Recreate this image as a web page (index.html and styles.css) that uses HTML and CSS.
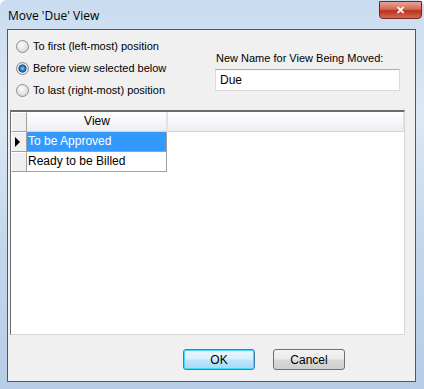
FILE: index.html
```html
<html>
<head>
<title>Move 'Due' View</title>
<link rel="stylesheet" href="styles.css">
</head>
<body>
<div class="window">
  <div class="titlebar">
    <span class="title">Move 'Due' View</span>
    <button class="close" type="button">&#x2715;</button>
  </div>
  <div class="client">
    <div class="top">
      <div class="options">
        <label class="opt"><span class="radio"></span>To first (left-most) position</label>
        <label class="opt"><span class="radio on"></span>Before view selected below</label>
        <label class="opt"><span class="radio"></span>To last (right-most) position</label>
      </div>
      <div class="rename">
        <div class="lbl">New Name for View Being Moved:</div>
        <div class="field">Due</div>
      </div>
    </div>

    <div class="grid">
      <div class="row head">
        <div class="rh"></div>
        <div class="cell">View</div>
        <div class="fill"></div>
      </div>
      <div class="row">
        <div class="rh"><span class="arrow"></span></div>
        <div class="cell sel">To be Approved</div>
      </div>
      <div class="row">
        <div class="rh"></div>
        <div class="cell">Ready to be Billed</div>
      </div>
    </div>

    <div class="buttons">
      <button class="btn def" type="button">OK</button>
      <button class="btn" type="button">Cancel</button>
    </div>
  </div>
</div>
</body>
</html>
```

FILE: styles.css
```css
body {
  margin: 0;
  font-family: "Liberation Sans", Arial, sans-serif;
  font-size: 11px;
}
.window {
  width: 424px;
  height: 389px;
  box-sizing: border-box;
  padding: 0 8px 7px 7px;
  border-radius: 6px 6px 0 0;
  background: linear-gradient(to bottom, #c9dcef 0%, #dce8f4 30%, #c4d8ec 60%, #b6cde6 100%);
  display: flex;
  flex-direction: column;
}
.titlebar {
  height: 29px;
  display: flex;
  justify-content: space-between;
  align-items: flex-start;
}
.title {
  margin-top: 7px;
  margin-left: 1px;
  font-family: "Open Sans", sans-serif;
  font-size: 12px;
  color: #000;
}
.close {
  width: 43px;
  height: 18px;
  margin-top: 1px;
  margin-right: -6px;
  border: 1px solid #6b2a22;
  border-radius: 0 0 4px 4px;
  background: linear-gradient(to bottom, #e8a493 0%, #d36a55 45%, #b8311c 55%, #d96a4a 100%);
  color: #fff;
  font-size: 11px;
  font-weight: bold;
  line-height: 14px;
  padding: 0;
}
.client {
  flex: 1;
  border: 1px solid #4c5866;
  background: #f0f0f0;
  display: flex;
  flex-direction: column;
}
.top {
  height: 80px;
  display: flex;
}
.options {
  width: 199px;
  padding: 5px 0 0 8px;
  display: flex;
  flex-direction: column;
}
.opt {
  height: 22px;
  display: flex;
  align-items: center;
  gap: 4px;
  color: #000;
}
.radio {
  width: 11px;
  height: 11px;
  border: 1px solid #8d8d8d;
  border-radius: 50%;
  background: radial-gradient(circle at 40% 35%, #fdfdfd 0%, #e3e3e3 55%, #c9c9c9 100%);
}
.radio.on {
  background: radial-gradient(circle, #7fd0ff 0%, #1a6fc0 35%, #0c4a8a 48%, #e7e7e7 56%, #d2d2d2 100%);
}
.rename {
  padding: 22px 0 0 0;
}
.lbl {
  height: 17px;
  margin-left: 1px;
}
.field {
  width: 179px;
  height: 20px;
  border: 1px solid #dadada;
  border-top-color: #ababab;
  background: #fff;
  padding-left: 4px;
  line-height: 20px;
  font-size: 12px;
}
.grid {
  height: 225px;
  margin: 0 10px 0 2px;
  background: #fff;
  border-top: 2px solid #6d6d6d;
  border-left: 1px solid #6d6d6d;
  border-right: 1px solid #d5d5d5;
  border-bottom: 1px solid #d5d5d5;
  box-sizing: border-box;
}
.row {
  display: flex;
  height: 20px;
}
.rh {
  width: 16px;
  box-sizing: border-box;
  background: #f0f0f0;
  border-right: 1px solid #a0a0a0;
  border-bottom: 1px solid #a0a0a0;
  border-top: 1px solid #fff;
  border-left: 1px solid #fff;
  display: flex;
  align-items: center;
  padding-left: 3px;
}
.arrow {
  width: 0;
  height: 0;
  border-top: 5px solid transparent;
  border-bottom: 5px solid transparent;
  border-left: 5px solid #000;
}
.cell {
  width: 140px;
  box-sizing: border-box;
  border-right: 1px solid #a0a0a0;
  border-bottom: 1px solid #a0a0a0;
  padding-left: 1px;
  line-height: 19px;
  font-size: 12px;
}
.cell.sel {
  background: #3399ff;
  color: #fff;
}
.head .cell, .head .fill {
  background: linear-gradient(to bottom, #ffffff 0%, #f6f7f9 50%, #eceef2 100%);
  border-right: 1px solid #e2e3e6;
  border-bottom: 1px solid #d5d5d5;
  text-align: center;
}
.head .fill {
  flex: 1;
  border-left: 1px solid #e2e3e6;
}
.head .rh {
  background: #f0f0f0;
}
.buttons {
  display: flex;
  justify-content: flex-end;
  gap: 18px;
  padding: 14px 70px 0 0;
}
.btn {
  width: 72px;
  height: 21px;
  border: 1px solid #707070;
  border-radius: 3px;
  background: linear-gradient(to bottom, #f4f4f4 0%, #e9e9e9 48%, #d9d9d9 52%, #cfcfcf 100%);
  font-family: "Liberation Sans", Arial, sans-serif;
  font-size: 12px;
  color: #000;
  padding: 0;
}
.btn.def {
  border: 1px solid #3c7fb1;
  box-shadow: inset 0 0 0 1px #48d8fb;
  background: linear-gradient(to bottom, #eaf6fd 0%, #d9f0fc 48%, #bee6fd 52%, #a7d9f5 100%);
}
```
